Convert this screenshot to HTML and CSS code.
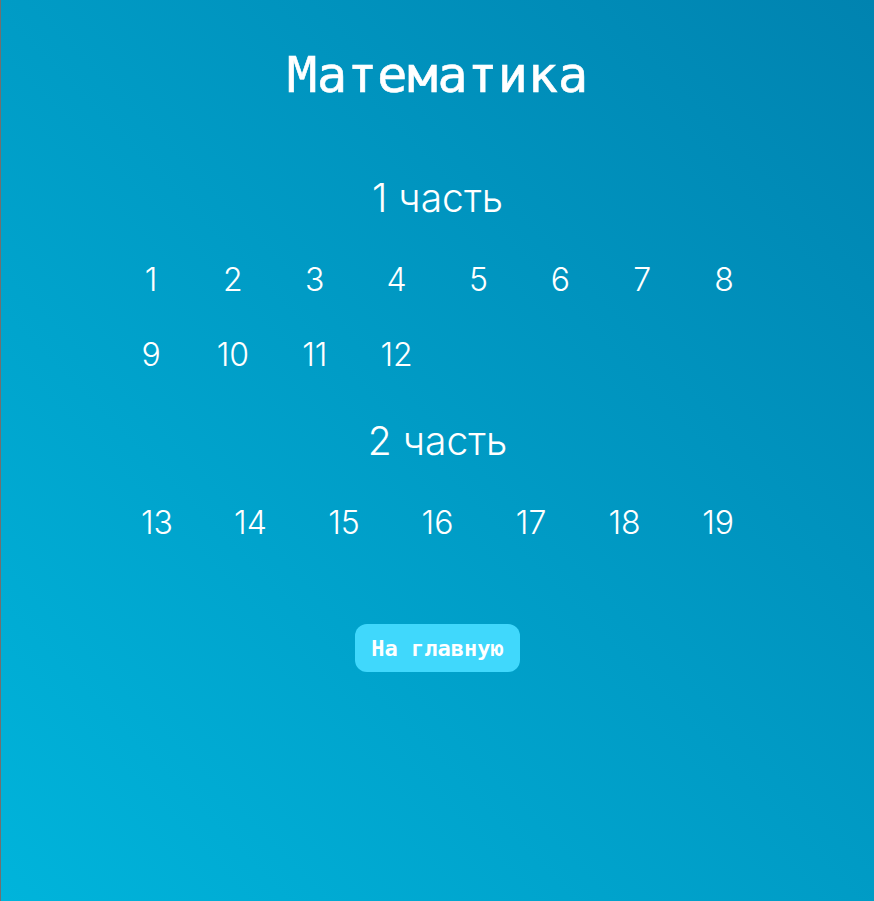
FILE: index.html
```html
<!DOCTYPE html>
<html lang="ru">
<head>
<meta charset="utf-8">
<title>Математика</title>
<link rel="stylesheet" href="styles.css">
</head>
<body>
<main class="page">
  <h1 class="title">Математика</h1>

  <h2 class="part-title part-title--first">1 часть</h2>
  <div class="tasks tasks--eight">
    <a class="task">1</a><a class="task">2</a><a class="task">3</a><a class="task">4</a>
    <a class="task">5</a><a class="task">6</a><a class="task">7</a><a class="task">8</a>
    <a class="task">9</a><a class="task">10</a><a class="task">11</a><a class="task">12</a>
  </div>

  <h2 class="part-title part-title--second">2 часть</h2>
  <div class="tasks tasks--seven">
    <a class="task">13</a><a class="task">14</a><a class="task">15</a><a class="task">16</a>
    <a class="task">17</a><a class="task">18</a><a class="task">19</a>
  </div>

  <a class="home-btn">На главную</a>
</main>
</body>
</html>
```

FILE: styles.css
```css
html, body {
  margin: 0;
  padding: 0;
  height: 100%;
}

body {
  background: linear-gradient(to top right, #00b4db, #0083b0);
  border-left: 1px solid #707070;
  box-sizing: border-box;
  color: #ffffff;
  font-family: "Inter", "Open Sans", sans-serif;
}

.page {
  display: flex;
  flex-direction: column;
  align-items: center;
}

.title {
  margin: 45px 0 0;
  font-family: "DejaVu Sans Mono", monospace;
  font-weight: 400;
  font-size: 50px;
  line-height: 60px;
  -webkit-text-stroke: 0.6px #ffffff;
}

.part-title {
  margin: 0;
  font-weight: 350;
  font-size: 39px;
  line-height: 50px;
}

.part-title--first {
  margin-top: 68px;
}

.part-title--second {
  margin-top: 24px;
}

.tasks {
  width: 75%;
  display: grid;
  margin-top: 19px;
}

.tasks--eight {
  grid-template-columns: repeat(8, 1fr);
}

.tasks--seven {
  grid-template-columns: repeat(7, 1fr);
}

.task {
  height: 75px;
  display: flex;
  align-items: center;
  justify-content: center;
  font-weight: 350;
  font-size: 32px;
  color: #ffffff;
}

.home-btn {
  margin-top: 64px;
  height: 48px;
  padding: 0 16px;
  display: flex;
  align-items: center;
  background: #40d8fc;
  border-radius: 12px;
  font-family: "DejaVu Sans Mono", monospace;
  font-weight: bold;
  font-size: 22px;
  color: #ffffff;
}
```
